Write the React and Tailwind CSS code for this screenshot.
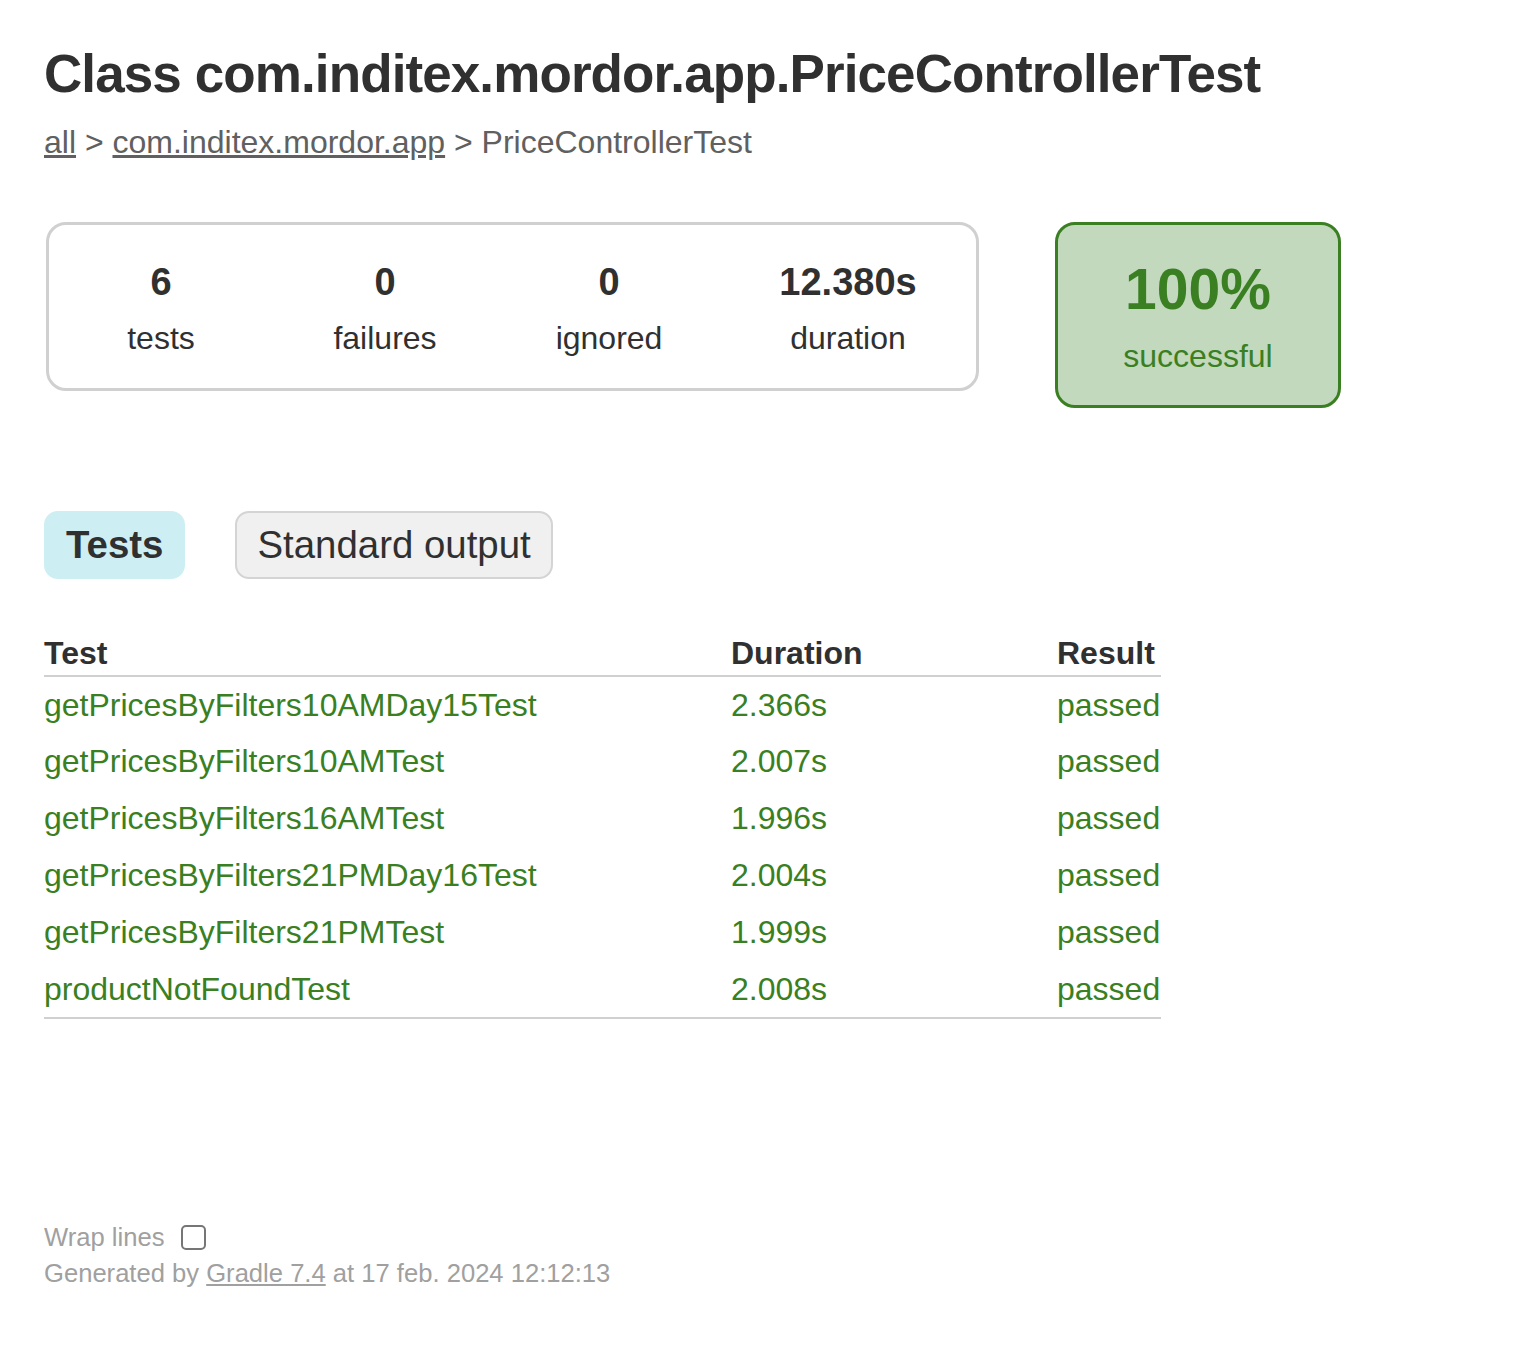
import React from "react";

const rows = [
  ["getPricesByFilters10AMDay15Test", "2.366s"],
  ["getPricesByFilters10AMTest", "2.007s"],
  ["getPricesByFilters16AMTest", "1.996s"],
  ["getPricesByFilters21PMDay16Test", "2.004s"],
  ["getPricesByFilters21PMTest", "1.999s"],
  ["productNotFoundTest", "2.008s"],
];

function Info({ value, label, w }) {
  return (
    <div className={`${w} text-center`}>
      <div className="text-[38px] leading-[44px] font-bold">{value}</div>
      <div className="mt-[16px] text-[32px] leading-[37px]">{label}</div>
    </div>
  );
}

export default function App() {
  return (
    <div
      className="min-h-[1356px] bg-white text-[#303030] pl-[44px] pt-[44px]"
      style={{ fontFamily: '"Liberation Sans", Arial, Helvetica, sans-serif' }}
    >
      <h1 className="text-[53px] leading-[60px] font-bold whitespace-nowrap tracking-[-0.9px]">
        Class com.inditex.mordor.app.PriceControllerTest
      </h1>
      <div className="mt-[20px] text-[32px] leading-[37px] text-[#606060] whitespace-nowrap">
        <a href="#" className="underline text-[#606060]">all</a>
        {" > "}
        <a href="#" className="underline text-[#606060]">com.inditex.mordor.app</a>
        {" > "}PriceControllerTest
      </div>

      <div className="mt-[61px] flex items-start">
        <div className="ml-[2px] w-[933px] h-[169px] border-[3px] border-[#d0d0d0] rounded-[20px] flex pt-[35px]">
          <Info value="6" label="tests" w="w-[224px]" />
          <Info value="0" label="failures" w="w-[224px]" />
          <Info value="0" label="ignored" w="w-[224px]" />
          <Info value="12.380s" label="duration" w="w-[254px]" />
        </div>
        <div className="ml-[76px] w-[286px] h-[186px] border-[3px] border-[#3a7f22] bg-[#c2d9bd] rounded-[20px] text-center text-[#3a7f22] pt-[31px]">
          <div className="text-[57px] leading-[66px] font-bold">100%</div>
          <div className="mt-[16px] text-[32px] leading-[37px]">successful</div>
        </div>
      </div>

      <div className="mt-[103px] flex gap-[50px]">
        <div className="h-[68px] px-[20px] flex items-center rounded-[14px] bg-[#cdeff4] border-2 border-[#cdeff4]">
          <span className="text-[38.4px] leading-[44px] font-bold">Tests</span>
        </div>
        <div className="h-[68px] px-[20px] flex items-center rounded-[14px] bg-[#f0f0f0] border-2 border-[#d4d4d4]">
          <span className="text-[38.4px] leading-[44px]">Standard output</span>
        </div>
      </div>

      <table className="mt-[52px] w-[1117px] border-collapse border-b-2 border-[#d0d0d0] text-[32px]">
        <thead>
          <tr className="border-b-2 border-[#d0d0d0]">
            <th className="w-[687px] h-[45px] p-0 pb-[3px] align-bottom text-left leading-[37px] font-bold">Test</th>
            <th className="w-[326px] h-[45px] p-0 pb-[3px] align-bottom text-left leading-[37px] font-bold">Duration</th>
            <th className="h-[45px] p-0 pb-[3px] align-bottom text-left leading-[37px] font-bold">Result</th>
          </tr>
        </thead>
        <tbody className="text-[#3a7f22]">
          {rows.map(([name, dur]) => (
            <tr key={name} className="h-[57px]">
              <td className="p-0 leading-[37px] whitespace-nowrap">
                <a href="#" className="text-[#3a7f22]">{name}</a>
              </td>
              <td className="p-0 leading-[37px] whitespace-nowrap">{dur}</td>
              <td className="p-0 leading-[37px] whitespace-nowrap">passed</td>
            </tr>
          ))}
        </tbody>
      </table>

      <div className="mt-[202px] text-[25.6px] text-[#a0a0a0] whitespace-nowrap">
        <div className="h-[32px] flex items-center">
          <span className="leading-[32px]">Wrap lines</span>
          <span className="ml-[17px] w-[25px] h-[25px] border-2 border-[#767676] rounded-[5px] bg-white inline-block" />
        </div>
        <div className="mt-[4px] leading-[32px]">
          Generated by <a href="#" className="underline text-[#a0a0a0]">Gradle 7.4</a> at 17 feb. 2024 12:12:13
        </div>
      </div>
    </div>
  );
}
